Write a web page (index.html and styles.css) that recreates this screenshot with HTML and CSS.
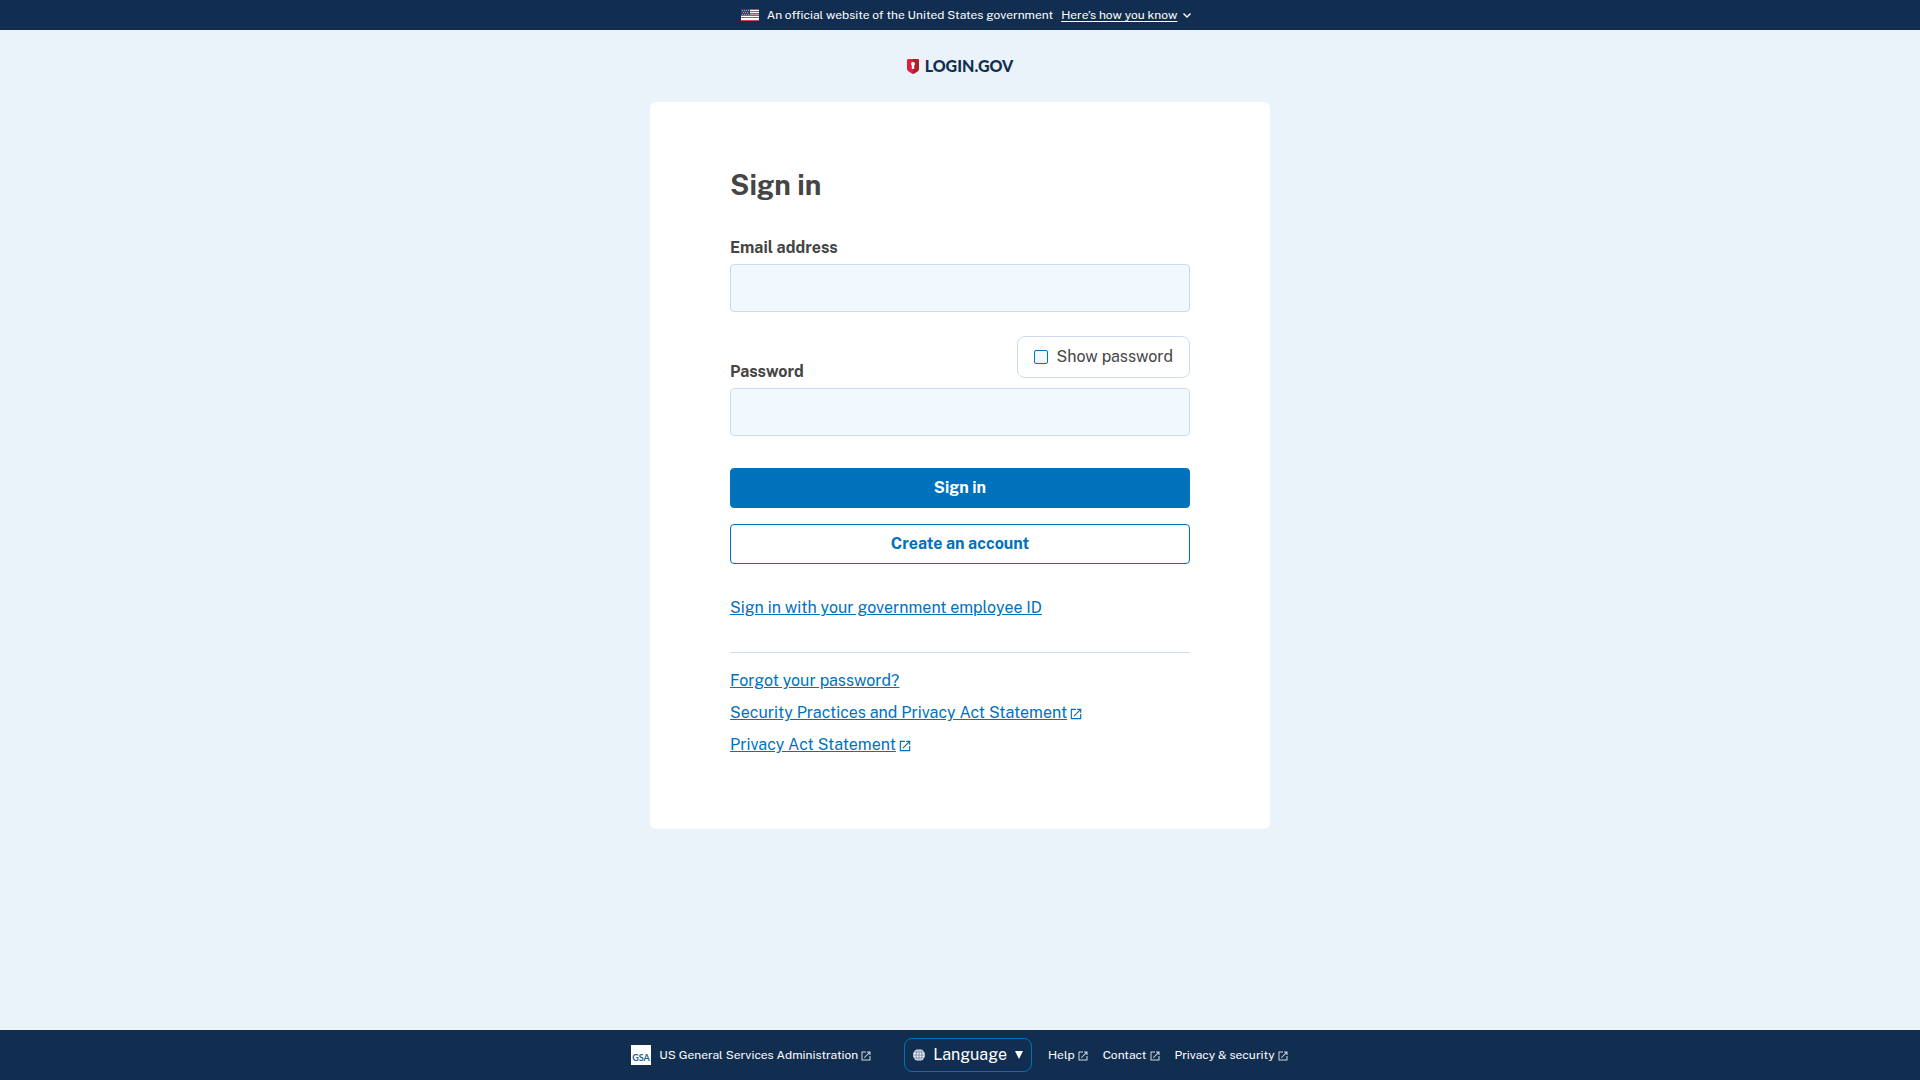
FILE: index.html
```html
<!DOCTYPE html>
<html lang="en">
<head>
<meta charset="utf-8">
<meta name="viewport" content="width=device-width, initial-scale=1">
<title>Sign in | Login.gov</title>
<link rel="stylesheet" href="styles.css">
</head>
<body>
<svg class="sprite" aria-hidden="true">
  <symbol id="external" viewBox="0 0 24 24"><path fill="currentColor" d="M19 19H5V5h7V3H3v18h18v-9h-2v7zM14 3v2h3.600l-9.800 9.800 1.400 1.400L19 6.400V10h2V3h-7z"/></symbol>
</svg>
<div class="banner">
  <svg class="flag" viewBox="0 0 18 12" aria-hidden="true">
    <path fill="#fff" d="M0 0h18v12H0z"/>
    <path stroke="#d4464f" d="M0 .5h18M0 2.500h18M0 4.500h18M0 6.500h18M0 8.500h18M0 11.500h18"/>
    <path fill="#d98a92" d="M0 5h18v1H0z"/>
    <path fill="#3b3f74" d="M0 0h9v6H0z"/>
    <path stroke="#c3c6dc" stroke-dasharray="1 1" d="M1 1.500h7M2 3.500h6M1 5.500h7" stroke-width=".7"/>
  </svg>
  <span class="banner-text">An official website of the United States government</span>
  <button class="banner-button" type="button"><span class="underlined">Here’s how you know</span><svg class="chevron" viewBox="0 0 8 5" aria-hidden="true"><path fill="none" stroke="currentColor" stroke-width="1.400" d="M.5.5 4 4 7.500.5"/></svg></button>
</div>
<header class="header">
  <a class="logo" href="#">
    <svg class="shield" viewBox="0 0 12 15" aria-hidden="true">
      <path fill="#e21d3e" d="M1 0h10l1 1v8.500c0 2.500-3 4-6 5.500-3-1.500-6-3-6-5.500V1z"/>
      <path fill="#b51d26" d="M6 0h5l1 1v8.500c0 2.500-3 4-6 5.500z"/>
      <path fill="#fff" d="M6 3a2 2 0 0 0-1.200 3.600V10h2.400V6.600A2 2 0 0 0 6 3z"/>
    </svg>
    <span>LOGIN.GOV</span>
  </a>
</header>
<main class="main">
  <div class="card">
    <h1 class="title">Sign in</h1>
    <form class="form">
      <label class="label" for="email">Email address</label>
      <input class="field" id="email" type="email">
      <div class="password-head">
        <label class="label" for="password">Password</label>
        <label class="toggle" for="show"><input class="check" id="show" type="checkbox">Show password</label>
      </div>
      <input class="field" id="password" type="password">
      <div class="actions">
        <button class="button primary" type="button">Sign in</button>
        <button class="button outline" type="button">Create an account</button>
      </div>
    </form>
    <a class="link" href="#">Sign in with your government employee ID</a>
    <ul class="links">
      <li><a class="link" href="#">Forgot your password?</a></li>
      <li><a class="link" href="#">Security Practices and Privacy Act Statement</a><svg class="ext" aria-hidden="true"><use href="#external"/></svg></li>
      <li><a class="link" href="#">Privacy Act Statement</a><svg class="ext" aria-hidden="true"><use href="#external"/></svg></li>
    </ul>
  </div>
</main>
<footer class="footer">
  <a class="footer-link agency" href="#">
    <svg class="gsa" viewBox="0 0 20 20" aria-hidden="true"><path fill="#fff" d="M0 0h20v20H0z"/><text class="gsa-text" x="10" y="16" text-anchor="middle">GSA</text></svg>
    <span>US General Services Administration</span><svg class="ext-small" aria-hidden="true"><use href="#external"/></svg>
  </a>
  <button class="language" type="button">
    <svg class="globe" viewBox="0 0 12 12" aria-hidden="true"><circle cx="6" cy="6" r="6" fill="#e8edf4"/><g fill="none" stroke="#112e51" stroke-width=".4"><ellipse cx="6" cy="6" rx="3" ry="6"/><path d="M6 0v12M0 6h12M1 3h10M1 9h10"/></g></svg>
    <span>Language</span>
    <svg class="arrow" viewBox="0 0 8 8" aria-hidden="true"><path fill="currentColor" d="M0 0h8L4 8z"/></svg>
  </button>
  <nav class="footer-nav">
    <a class="footer-link" href="#">Help<svg class="ext-small" aria-hidden="true"><use href="#external"/></svg></a>
    <a class="footer-link" href="#">Contact<svg class="ext-small" aria-hidden="true"><use href="#external"/></svg></a>
    <a class="footer-link" href="#">Privacy &amp; security<svg class="ext-small" aria-hidden="true"><use href="#external"/></svg></a>
  </nav>
</footer>
</body>
</html>
```
FILE: styles.css
```css
* { box-sizing: border-box; }
body {
  margin: 0;
  min-height: 100vh;
  display: flex;
  flex-direction: column;
  background: #eaf2fa;
  color: #454545;
  font: 16px/24px "Public Sans", Inter, "Liberation Sans", sans-serif;
}
button { font: inherit; color: inherit; cursor: pointer; margin: 0; }
.sprite { position: absolute; width: 0; height: 0; }
.banner {
  display: flex;
  align-items: center;
  justify-content: center;
  gap: 8px;
  height: 30px;
  padding-left: 12px;
  background: #112e51;
  color: #fff;
  font-size: 12px;
  line-height: 16px;
}
.flag { width: 18px; height: 12px; }
.banner-button { display: flex; align-items: center; gap: 6px; padding: 0; border: 0; background: none; }
.underlined { text-decoration: underline; text-underline-offset: 2px; }
.chevron { width: 8px; height: 5px; }
.header { display: flex; justify-content: center; align-items: center; height: 72px; }
.logo {
  display: flex;
  align-items: center;
  gap: 6px;
  color: #112e51;
  font: 900 16px/16px Lato, sans-serif;
  text-decoration: none;
}
.shield { width: 12px; height: 15px; }
.main { flex: 1; padding: 0 16px 32px; }
.card {
  max-width: 620px;
  margin: 0 auto;
  padding: 64px 80px 72px;
  border-radius: 6px;
  background: #fff;
}
.title { margin: 0 0 34px; font-size: 28px; line-height: 38px; font-weight: 700; }
.form { display: flex; flex-direction: column; }
.label { font-weight: 700; line-height: 20px; }
.field {
  width: 100%;
  height: 48px;
  margin: 6px 0 0;
  padding: 8px;
  border: 1px solid #cbdcf0;
  border-radius: 4px;
  background: #f1f9ff;
  font: inherit;
}
.password-head { display: flex; justify-content: space-between; align-items: flex-end; margin-top: 24px; }
.toggle {
  display: flex;
  align-items: center;
  gap: 8px;
  height: 42px;
  margin-bottom: 4px;
  padding: 0 16px;
  border: 1px solid #cbdcf0;
  border-radius: 8px;
}
.check { appearance: none; width: 14px; height: 14px; margin: 0; border: 1px solid #0071bb; border-radius: 2px; background: #f1f9ff; }
.actions { display: flex; flex-direction: column; gap: 16px; margin: 32px 0; }
.button { height: 40px; border: 1px solid #0071bb; border-radius: 4px; font-weight: 700; }
.primary { background: #0071bb; color: #fff; }
.outline { background: #fff; color: #0071bb; }
.link { color: #0071bb; text-decoration: underline; text-underline-offset: 1px; }
.links {
  display: grid;
  gap: 8px;
  margin: 32px 0 0;
  padding: 16px 0 0;
  border-top: 1px solid #cbdcf0;
  list-style: none;
}
.links li { display: flex; align-items: center; gap: 2px; }
.ext { width: 14px; height: 14px; margin-top: 2px; color: #0071bb; }
.footer {
  display: flex;
  align-items: center;
  justify-content: center;
  gap: 16px;
  height: 50px;
  background: #112e51;
  color: #fff;
  font-size: 12px;
  line-height: 16px;
}
.footer-link { display: flex; align-items: center; gap: 2px; color: #fff; text-decoration: none; }
.agency { margin-right: 16px; }
.gsa { width: 20px; height: 20px; margin-right: 6px; }
.gsa-text { font: 700 9px Lato, sans-serif; fill: #1c5d96; }
.ext-small { width: 12px; height: 12px; margin-top: 1px; color: #d0d8e2; }
.language {
  display: flex;
  align-items: center;
  gap: 8px;
  height: 34px;
  padding: 0 8px;
  border: 1px solid #0071bb;
  border-radius: 8px;
  background: none;
  color: #fff;
  font-size: 16px;
  line-height: 24px;
}
.globe { width: 12px; height: 12px; }
.arrow { width: 8px; height: 8px; }
.footer-nav { display: flex; gap: 14px; }
```
